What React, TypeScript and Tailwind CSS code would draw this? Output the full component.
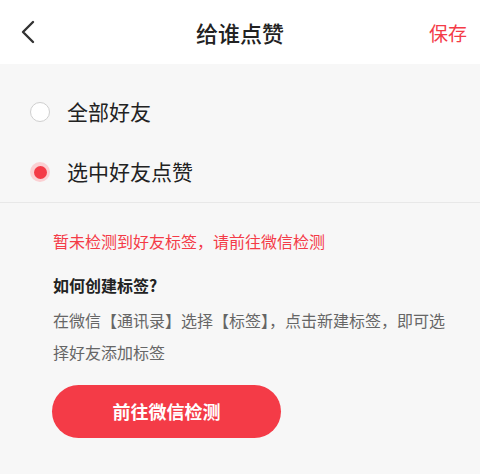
import React from "react";

export default function App() {
  const font = { fontFamily: '"Noto Sans CJK SC", "Noto Sans", sans-serif' };
  return (
    <div className="w-[480px] h-[474px] bg-[#f7f7f7] overflow-hidden" style={font}>
      <div className="h-16 bg-white flex items-center justify-between relative">
        <div className="w-16 pl-[20px] flex items-center">
          <svg width="16" height="24" viewBox="0 0 16 24" fill="none">
            <path d="M13 2 L3 12 L13 22" stroke="#333" strokeWidth="2.4" strokeLinecap="round" strokeLinejoin="round" />
          </svg>
        </div>
        <div className="text-[22px] leading-none font-medium text-[#222]">给谁点赞</div>
        <div className="w-16 pr-[13px] text-right text-[19px] leading-none text-[#f43b47]">保存</div>
      </div>

      <div className="pt-[18px] border-b border-[#e8e8e8]">
        <div className="h-[60px] flex items-center pl-[30px]">
          <div className="w-5 h-5 rounded-full border border-[#cfcfcf] bg-white" />
          <div className="ml-[17px] text-[21px] text-[#222]">全部好友</div>
        </div>
        <div className="h-[60px] flex items-center pl-[30px]">
          <div className="w-5 h-5 rounded-full bg-[#fbd0d3] flex items-center justify-center">
            <div className="w-[13px] h-[13px] rounded-full bg-[#f43b47]" />
          </div>
          <div className="ml-[17px] text-[21px] text-[#222]">选中好友点赞</div>
        </div>
      </div>

      <div className="pl-[53px] pr-[20px] pt-[26px]">
        <div className="text-[16px] leading-6 text-[#f43b47]">暂未检测到好友标签，请前往微信检测</div>
        <div className="mt-[20px] text-[16px] leading-6 font-bold text-[#222]">如何创建标签?</div>
        <div className="mt-[7px] text-[16px] leading-8 text-[#666]">
          在微信【通讯录】选择【标签】，点击新建标签，即可选
          <br />
          择好友添加标签
        </div>
        <button className="mt-[17px] -ml-px w-[229px] h-[53px] rounded-full bg-[#f43b47] text-white text-[18px] font-semibold flex items-center justify-center">
          前往微信检测
        </button>
      </div>
    </div>
  );
}
